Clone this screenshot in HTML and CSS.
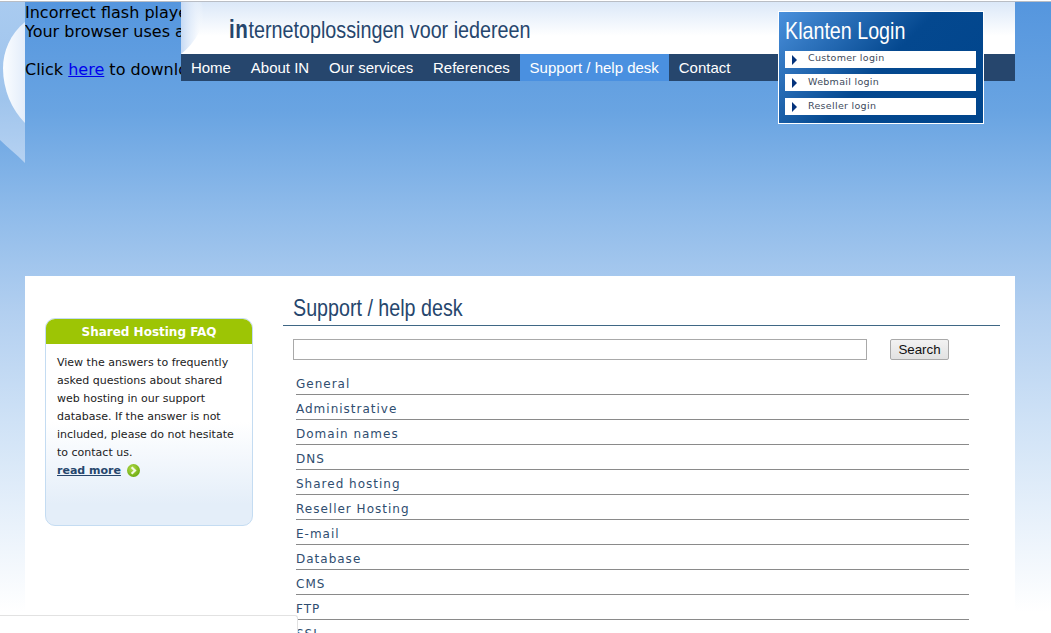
FILE: index.html
```html
<!DOCTYPE html>
<html lang="en">
<head>
<meta charset="utf-8">
<title>Support / help desk</title>
<link rel="stylesheet" href="styles.css">
</head>
<body>
<div class="page">
  <svg class="swoosh" width="25" height="162" viewBox="0 0 25 162" aria-hidden="true">
    <defs>
      <linearGradient id="band" x1="0" y1="0" x2="0" y2="1">
        <stop offset="0" stop-color="#a9cbf0"/>
        <stop offset=".6" stop-color="#9fc4ec"/>
        <stop offset="1" stop-color="#b6d2f2"/>
      </linearGradient>
      <linearGradient id="crescent" x1="0" y1="0" x2="1" y2="0">
        <stop offset="0" stop-color="#fbfdff"/>
        <stop offset="1" stop-color="#e3edfa"/>
      </linearGradient>
    </defs>
    <path d="M0 0 H25 V161 C16 152 7 145 0 138 Z" fill="url(#band)"/>
    <path d="M25 20 C10 32 3 50 3 66 C3 88 12 108 25 121 Z" fill="url(#crescent)"/>
  </svg>

  <div class="flash">
    Incorrect flash player<br>
    Your browser uses an old version<br><br>
    Click <a href="#">here</a> to download the latest version
  </div>

  <header class="header">
    <div class="brand">
      <svg class="brand-arc" width="40" height="52" viewBox="0 0 40 52" aria-hidden="true">
        <defs>
          <linearGradient id="arc" x1="0" y1="0" x2="1" y2="0">
            <stop offset="0" stop-color="#c6daf4"/>
            <stop offset=".6" stop-color="#e6effb" stop-opacity=".6"/>
            <stop offset="1" stop-color="#ffffff" stop-opacity="0"/>
          </linearGradient>
        </defs>
        <path d="M0 0 H20 C27 14 20 36 0 52 Z" fill="url(#arc)"/>
      </svg>
      <p class="brand-text"><b>in</b>ternetoplossingen voor iedereen</p>
    </div>
    <nav class="nav">
      <a href="#">Home</a>
      <a href="#">About IN</a>
      <a href="#">Our services</a>
      <a href="#">References</a>
      <a href="#" class="active">Support / help desk</a>
      <a href="#">Contact</a>
    </nav>
  </header>

  <aside class="login">
    <h2 class="login-title">Klanten Login</h2>
    <a href="#" class="login-row"><span class="arrow"></span>Customer login</a>
    <a href="#" class="login-row lower"><span class="arrow"></span>Webmail login</a>
    <a href="#" class="login-row lower third"><span class="arrow"></span>Reseller login</a>
  </aside>

  <main class="panel">
    <aside class="faq">
      <h3 class="faq-title">Shared Hosting FAQ</h3>
      <div class="faq-body">
        <p>View the answers to frequently asked questions about shared web hosting in our support database. If the answer is not included, please do not hesitate to contact us.</p>
        <a href="#" class="more">read more</a>
        <svg class="more-icon" width="13" height="13" viewBox="0 0 13 13" aria-hidden="true">
          <defs>
            <radialGradient id="ball" cx=".4" cy=".35" r=".7">
              <stop offset="0" stop-color="#b4dc4a"/>
              <stop offset="1" stop-color="#68a80c"/>
            </radialGradient>
          </defs>
          <circle cx="6.5" cy="6.5" r="6.5" fill="url(#ball)"/>
          <path d="M4.6 3.2 L8 6.5 L4.6 9.8" fill="none" stroke="#f3f9e2" stroke-width="2.2"/>
        </svg>
      </div>
    </aside>
    <section class="content">
      <h1 class="title"><span class="squeezed">Support / help desk</span></h1>
      <form class="search">
        <input class="search-input" type="text">
        <button class="search-btn" type="button">Search</button>
      </form>
      <ul class="topics">
        <li>General</li>
        <li>Administrative</li>
        <li>Domain names</li>
        <li>DNS</li>
        <li>Shared hosting</li>
        <li>Reseller Hosting</li>
        <li>E-mail</li>
        <li>Database</li>
        <li>CMS</li>
        <li>FTP</li>
        <li>SSL</li>
      </ul>
    </section>
  </main>

  <div class="corner"></div>
</div>
</body>
</html>
```

FILE: styles.css
```css
* { box-sizing: border-box; }
html, body { margin: 0; height: 100%; overflow: hidden; background: #fff; }
.page {
  position: relative;
  height: 632px;
  margin-top: 1px;
  border-top: 1px solid #b9bdc4;
  overflow: hidden;
  background: linear-gradient(#5596de 0, #69a4e2 110px, #8fbbea 210px, #b2cff0 310px, #cfe2f6 420px, #fff 610px);
  font-family: "DejaVu Sans", Verdana, sans-serif;
}
.swoosh { position: absolute; left: 0; top: 0; }
.flash {
  width: 990px;
  height: 274px;
  margin-left: 25px;
  padding-top: 1px;
  font-size: 16px;
  line-height: 19px;
  white-space: nowrap;
  overflow: hidden;
  color: #000;
}
.flash a { color: #00e; }
.header { position: absolute; left: 181px; top: 0; width: 834px; }
.brand {
  position: relative;
  height: 52px;
  background: linear-gradient(#dbe8f8 0, #fff 34px);
  padding: 13px 0 0 48px;
}
.brand-arc { position: absolute; left: 0; top: 0; }
.brand-text {
  position: relative;
  margin: 0;
  font-family: "Liberation Sans", Arial, sans-serif;
  font-size: 24px;
  line-height: 28px;
  color: #26466d;
  white-space: nowrap;
  transform: scaleX(.822);
  transform-origin: left center;
}
.brand-text b { font-size: 25px; letter-spacing: .8px; }
.nav { display: flex; height: 27px; background: #26466d; }
.nav a {
  padding: 0 9.93px;
  font-family: "Liberation Sans", Arial, sans-serif;
  font-size: 15px;
  line-height: 27px;
  color: #fff;
  text-decoration: none;
}
.nav a.active { background: #4a90e0; }
.login {
  position: absolute;
  left: 778px;
  top: 9px;
  width: 206px;
  height: 113px;
  border: 1px solid #fff;
  background: linear-gradient(135deg, #4a90dc 0, #04488f 50%, #00458c 100%);
  padding: 5px 7px 0 6px;
}
.login-title {
  margin: 0 0 5px;
  height: 29px;
  font-family: "Liberation Sans", Arial, sans-serif;
  font-weight: 400;
  font-size: 24px;
  line-height: 28px;
  color: #fff;
  white-space: nowrap;
  transform: scaleX(.82);
  transform-origin: left center;
}
.login-row {
  display: flex;
  align-items: flex-start;
  height: 17px;
  margin-bottom: 6px;
  padding-left: 7px;
  background: #fff;
  font-size: 9.5px;
  line-height: 14px;
  letter-spacing: .3px;
  color: #3d4a5c;
  text-decoration: none;
}
.login-row.lower { line-height: 16px; }
.login-row.third { margin-top: 7px; }
.arrow {
  flex: none;
  width: 0;
  height: 0;
  margin: 4px 11px 0 0;
  border-left: 5px solid #04337c;
  border-top: 5px solid transparent;
  border-bottom: 5px solid transparent;
}
.panel {
  display: flex;
  width: 990px;
  height: 400px;
  margin-left: 25px;
  background: #fff;
}
.faq {
  flex: none;
  width: 208px;
  height: 208px;
  margin: 42px 30px 0 20px;
  border: 1px solid #c4dcf2;
  border-radius: 10px;
  overflow: hidden;
  background: linear-gradient(#fff 50%, #e4eef9 90%);
}
.faq-title {
  margin: 0;
  height: 25px;
  background: #9dc505;
  font-size: 12px;
  line-height: 26px;
  text-align: center;
  color: #fff;
}
.faq-body {
  padding: 10px 10px 0 11px;
  font-size: 11px;
  line-height: 18px;
  color: #222;
}
.faq-body p { margin: 0; }
.more { font-weight: 700; color: #26466d; }
.more-icon { vertical-align: -3px; margin-left: 3px; }
.content { flex: 1; min-width: 0; padding-right: 15px; }
.title {
  margin: 15px 0 0;
  height: 35px;
  padding-left: 10px;
  border-bottom: 1px solid #3f6785;
  font-weight: 400;
  font-size: 24px;
  line-height: 33px;
  color: #26466d;
}
.squeezed {
  display: block;
  font-family: "Liberation Sans", Arial, sans-serif;
  white-space: nowrap;
  transform: scaleX(.82);
  transform-origin: left center;
}
.search { display: flex; margin: 13px 0 0 10px; height: 21px; }
.search-input {
  width: 574px;
  height: 21px;
  border: 1px solid #a9a9a9;
  background: #fff;
  padding: 0;
}
.search-btn {
  width: 59px;
  height: 21px;
  margin-left: 23px;
  padding: 0;
  border: 1px solid #a9a9a9;
  border-radius: 2px;
  background: linear-gradient(#f2f2f2, #e2e2e2);
  font-family: "Liberation Sans", Arial, sans-serif;
  font-size: 13.33px;
  color: #111;
}
.topics { list-style: none; margin: 10px 0 0 13px; padding: 0; width: 673px; }
.topics li {
  height: 25px;
  padding-top: 4px;
  border-bottom: 1px solid #8a8a8a;
  font-size: 12px;
  line-height: 21px;
  letter-spacing: 1px;
  color: #2f4d6f;
}
.corner {
  position: absolute;
  left: 0;
  bottom: 0;
  width: 298px;
  height: 18px;
  border: 1px solid #e2e2e2;
  border-width: 1px 1px 0 0;
  border-top-right-radius: 3px;
  background: #fff;
}
```
